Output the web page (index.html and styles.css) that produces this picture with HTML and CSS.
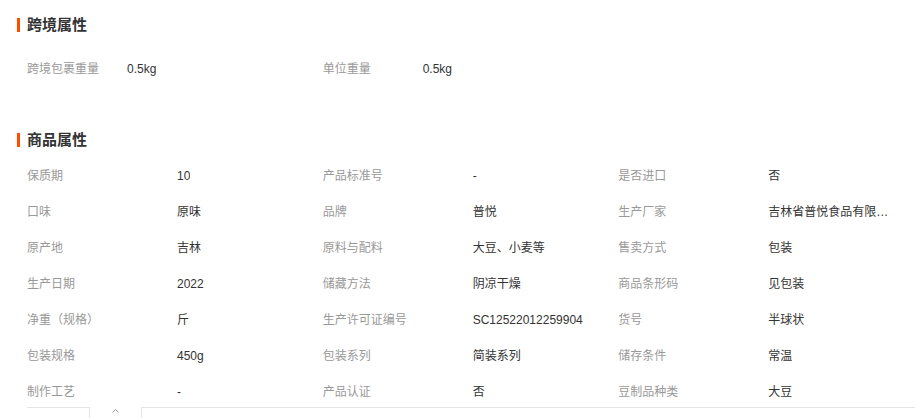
FILE: index.html
```html
<!DOCTYPE html>
<html>
  <head>
    <title>商品属性</title>
    <meta name="viewport" content="width=device-width, initial-scale=1" />
    <link rel="stylesheet" href="styles.css">
  </head>
  <body>
    <div class="attrs">
      <h3 class="attr-title">跨境属性</h3>
      <ul class="attr-list cross">
        <li><span class="attr-name">跨境包裹重量</span><span class="attr-value">0.5kg</span></li>
        <li><span class="attr-name">单位重量</span><span class="attr-value">0.5kg</span></li>
      </ul>

      <h3 class="attr-title second">商品属性</h3>
      <ul class="attr-list goods">
        <li><span class="attr-name">保质期</span><span class="attr-value">10</span></li>
        <li><span class="attr-name">产品标准号</span><span class="attr-value">-</span></li>
        <li><span class="attr-name">是否进口</span><span class="attr-value">否</span></li>

        <li><span class="attr-name">口味</span><span class="attr-value">原味</span></li>
        <li><span class="attr-name">品牌</span><span class="attr-value">普悦</span></li>
        <li><span class="attr-name">生产厂家</span><span class="attr-value" title="吉林省普悦食品有限公司">吉林省普悦食品有限公司</span></li>

        <li><span class="attr-name">原产地</span><span class="attr-value">吉林</span></li>
        <li><span class="attr-name">原料与配料</span><span class="attr-value">大豆、小麦等</span></li>
        <li><span class="attr-name">售卖方式</span><span class="attr-value">包装</span></li>

        <li><span class="attr-name">生产日期</span><span class="attr-value">2022</span></li>
        <li><span class="attr-name">储藏方法</span><span class="attr-value">阴凉干燥</span></li>
        <li><span class="attr-name">商品条形码</span><span class="attr-value">见包装</span></li>

        <li><span class="attr-name">净重（规格）</span><span class="attr-value">斤</span></li>
        <li><span class="attr-name">生产许可证编号</span><span class="attr-value">SC12522012259904</span></li>
        <li><span class="attr-name">货号</span><span class="attr-value">半球状</span></li>

        <li><span class="attr-name">包装规格</span><span class="attr-value">450g</span></li>
        <li><span class="attr-name">包装系列</span><span class="attr-value">简装系列</span></li>
        <li><span class="attr-name">储存条件</span><span class="attr-value">常温</span></li>

        <li><span class="attr-name">制作工艺</span><span class="attr-value">-</span></li>
        <li><span class="attr-name">产品认证</span><span class="attr-value">否</span></li>
        <li><span class="attr-name">豆制品种类</span><span class="attr-value">大豆</span></li>
      </ul>
    </div>

    <div class="bottom-tabs">
      <div class="tab-left"></div>
      <div class="tab-toggle">
        <svg width="7" height="4" viewBox="0 0 7 4"><polyline points="0.5,3.5 3.5,0.5 6.5,3.5" fill="none" stroke="#999" stroke-width="1"/></svg>
      </div>
      <div class="tab-rest"></div>
    </div>
  </body>
</html>
```

FILE: styles.css
```css
body {
  margin: 0;
  font-family: "Liberation Sans", "Noto Sans CJK SC", sans-serif;
  font-size: 12px;
  color: #333;
  background-color: #fff;
}

.attrs {
  padding: 0 5px 0 27px;
}

.attr-title {
  position: relative;
  margin: 18px 0 0;
  height: 14px;
  line-height: 14px;
  font-size: 15px;
  font-weight: bold;
  color: #333;
}

.attr-title::before {
  content: "";
  position: absolute;
  left: -10px;
  top: 0;
  width: 3px;
  height: 14px;
  background-color: #ff4d00;
}

.attr-title.second {
  margin-top: 46px;
}

.attr-list {
  list-style: none;
  margin: 19px 0 0;
  padding: 0;
  display: grid;
  grid-template-columns: repeat(3, 1fr);
}

.attr-list.goods {
  margin-top: 11px;
}

.attr-list li {
  display: flex;
  height: 36px;
  line-height: 36px;
  white-space: nowrap;
}

.attr-name {
  flex: none;
  width: 150px;
  color: #999;
}

.cross .attr-name {
  width: 100px;
}

.attr-value {
  max-width: 126px;
  overflow: hidden;
  text-overflow: ellipsis;
  color: #333;
}

.bottom-tabs {
  position: fixed;
  left: 27px;
  right: 4px;
  bottom: 0;
  height: 11px;
  display: flex;
  background-color: #fff;
}

.tab-left {
  width: 62px;
  border-top: 1px solid #e5e5e5;
  border-right: 1px solid #e5e5e5;
}

.tab-toggle {
  width: 50px;
  display: flex;
  justify-content: center;
  padding-top: 2px;
  padding-right: 1px;
}

.tab-toggle svg {
  display: block;
}

.tab-rest {
  flex: 1;
  border-top: 1px solid #e5e5e5;
  border-left: 1px solid #e5e5e5;
}
```
